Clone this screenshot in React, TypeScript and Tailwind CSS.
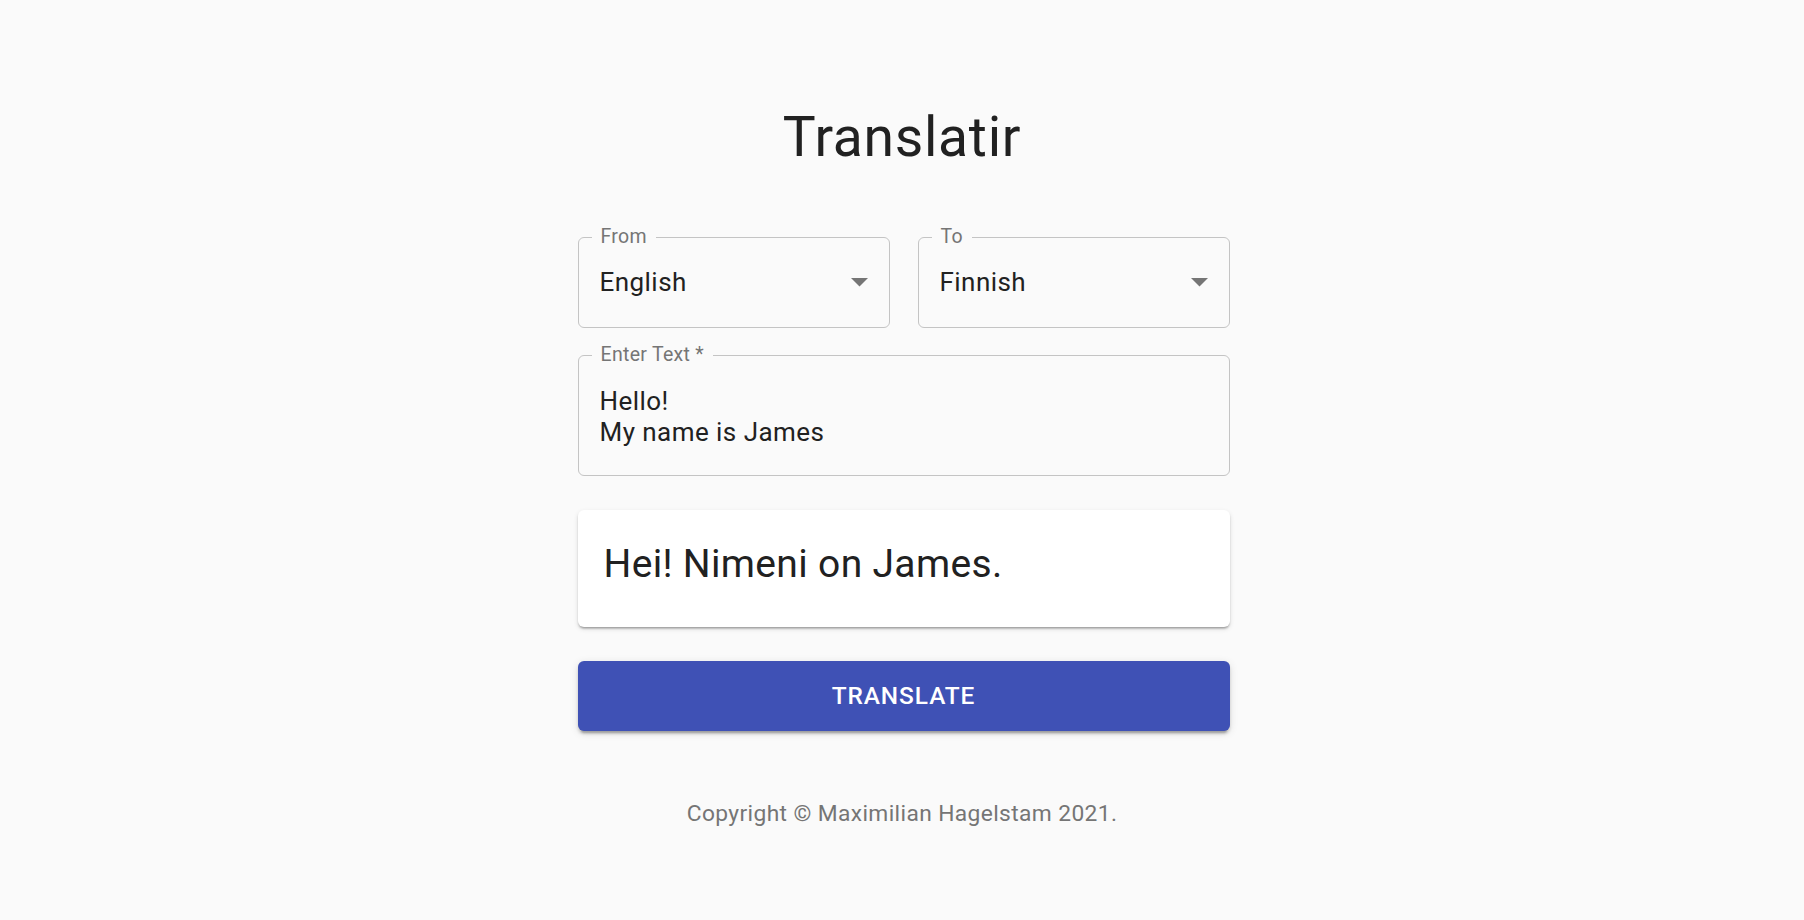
import { useState } from "react";

const languages = ["English", "Finnish", "Swedish", "German"];

const Arrow = () => (
    <svg width="17" height="9" viewBox="0 0 17 9" className="shrink-0">
        <polygon points="0,0 17,0 8.5,8.5" fill="#757575" />
    </svg>
);

const OutlinedSelect = ({ label, value }: { label: string; value: string }) => (
    <div className="relative h-[91px] rounded-[6px] border border-[#c4c4c4] flex items-center justify-between pl-[21px] pr-[21px] cursor-pointer">
        <span className="absolute left-[13px] -top-[1px] -translate-y-1/2 bg-[#fafafa] px-[9px] text-[19.5px] leading-none tracking-[0.3px] text-[#757575]">
            {label}
        </span>
        <span className="text-[26px] leading-[31px] tracking-[0.45px] text-[#212121]">{value}</span>
        <Arrow />
    </div>
);

export default function App() {
    const [text, setText] = useState("Hello!\nMy name is James");
    const [from] = useState(languages[0]);
    const [to] = useState(languages[1]);

    return (
        <div
            className="min-h-screen bg-[#fafafa] pt-[103px] pb-10"
            style={{ fontFamily: "Roboto, 'Liberation Sans', sans-serif" }}
        >
            <h1 className="text-center text-[55.25px] leading-[68px] font-normal tracking-[0.7px] text-[#212121]">Translatir</h1>

            <div className="flex justify-center pl-[3px]">
                <div className="w-[652px] flex flex-col">
                    {/* language pickers */}
                    <div className="grid grid-cols-2 gap-[28px] mt-[66px]">
                        <OutlinedSelect label="From" value={from} />
                        <OutlinedSelect label="To" value={to} />
                    </div>

                    {/* input */}
                    <div className="relative mt-[27px] rounded-[6px] border border-[#c4c4c4] pl-[21px] pr-[21px] pt-[30px] pb-[27px]">
                        <span className="absolute left-[13px] -top-[1px] -translate-y-1/2 bg-[#fafafa] px-[9px] text-[19.5px] leading-none tracking-[0.3px] text-[#757575]">
                            Enter Text *
                        </span>
                        <textarea
                            rows={2}
                            value={text}
                            onChange={(e) => setText(e.target.value)}
                            className="block w-full resize-none bg-transparent outline-none text-[26px] leading-[31px] tracking-[0.45px] h-[62px] text-[#212121] overflow-hidden"
                        />
                    </div>

                    {/* result */}
                    <div className="mt-[34px] h-[117px] rounded-[6px] bg-white pl-[26px] pt-[28px] shadow-[0px_3px_2px_-2px_rgba(0,0,0,0.2),0px_2px_2px_0px_rgba(0,0,0,0.14),0px_2px_5px_0px_rgba(0,0,0,0.12)]">
                        <p className="text-[39px] leading-[52px] tracking-[0.33px] text-[#212121]">Hei! Nimeni on James.</p>
                    </div>

                    <button className="mt-[34px] h-[70px] w-full rounded-[6px] bg-[#3f51b5] text-white text-[24.4px] font-medium uppercase tracking-[0.95px] shadow-[0px_5px_2px_-3px_rgba(0,0,0,0.2),0px_3px_3px_0px_rgba(0,0,0,0.14),0px_2px_8px_0px_rgba(0,0,0,0.12)]">
                        Translate
                    </button>
                </div>
            </div>

            <p className="mt-[67px] text-center text-[22.75px] leading-[32.5px] tracking-[0.39px] text-[#757575]">
                Copyright © Maximilian Hagelstam 2021.
            </p>
        </div>
    );
}
